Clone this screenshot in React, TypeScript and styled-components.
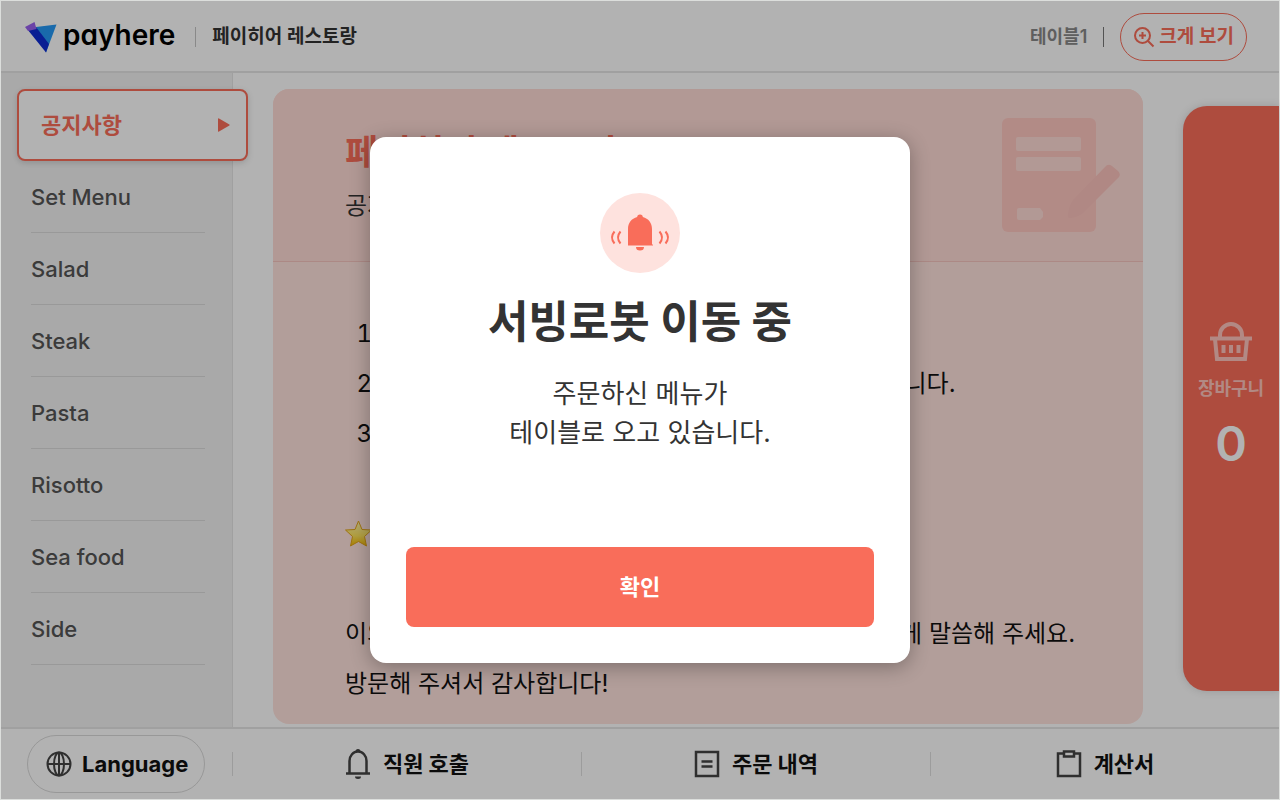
import React from "react";
import styled, { createGlobalStyle, css } from "styled-components";

const color = {
  accent: "#f96d5a",
  white: "#ffffff",
  ink: "#333333",
  line: "#e6e6e6",
};

const GlobalStyle = createGlobalStyle`
  *, *::before, *::after { box-sizing: border-box; }
  body {
    margin: 0;
    background: #fff;
    font-family: Inter, "Noto Sans CJK KR", "Noto Sans", sans-serif;
    color: ${color.ink};
  }
  button { font: inherit; line-height: 28px; color: inherit; background: none; border: 0; padding: 0; cursor: pointer; }
  h1, h2, p, ol, ul { margin: 0; }
`;

const Page = styled.div`
  position: relative;
  display: flex;
  flex-direction: column;
  min-height: 100vh;
  border: 1px solid #dcdedc;
`;

const Header = styled.header`
  display: flex;
  align-items: center;
  justify-content: space-between;
  height: 72px;
  padding: 2px 32px 0 24px;
  border-bottom: 2px solid ${color.line};
`;

const HeaderGroup = styled.div`
  display: flex;
  align-items: center;
  gap: 16px;
`;

const Brand = styled.a`
  display: flex;
  align-items: center;
  gap: 6px;
  margin-right: 4px;
  color: #000;
  text-decoration: none;
`;

const Wordmark = styled.span`
  padding-bottom: 4px;
  font-size: 28px;
  line-height: 32px;
  font-weight: 600;
  font-feature-settings: "cv11";
`;

const Rule = styled.span<{ $tone: string; $height?: number }>`
  width: 1px;
  height: ${(p) => p.$height ?? 20}px;
  background: ${(p) => p.$tone};
`;

const StoreName = styled.h1`
  font-size: 19px;
  line-height: 28px;
  font-weight: 600;
`;

const TableName = styled.span`
  font-size: 18px;
  line-height: 28px;
  font-weight: 600;
  color: #888;
`;

const ZoomButton = styled.button`
  display: flex;
  align-items: center;
  gap: 4px;
  height: 48px;
  padding: 0 12px;
  border: 1px solid ${color.accent};
  border-radius: 24px;
  color: ${color.accent};
  font-size: 19px;
  font-weight: 600;
`;

const Main = styled.main`
  display: flex;
  flex: 1;
`;

const Sidebar = styled.nav`
  flex: none;
  width: 232px;
  padding: 16px 0 0 16px;
  background: #f3f3f3;
  border-right: 1px solid ${color.line};
`;

const MenuList = styled.ul`
  list-style: none;
  padding: 0;
`;

const MenuItem = styled.li<{ $active?: boolean }>`
  height: 72px;
  ${(p) => (p.$active ? css`margin-right: -16px;` : css`margin: 0 27px 0 14px;`)}
`;

const MenuButton = styled.button<{ $active?: boolean }>`
  display: flex;
  align-items: center;
  justify-content: space-between;
  width: 100%;
  height: 100%;
  font-size: 22px;
  font-weight: 500;
  color: #555;
  border-bottom: 1px solid #dcdcdc;
  ${(p) =>
    p.$active &&
    css`
      position: relative;
      padding: 0 16px 0 22px;
      font-weight: 700;
      color: ${color.accent};
      background: #fff;
      border: 2px solid ${color.accent};
      border-radius: 8px;
      box-shadow: 0 2px 6px rgba(0, 0, 0, 0.15);
    `}
`;

const Content = styled.div`
  flex: 1;
  min-width: 0;
  padding: 16px 40px 3px;
`;

const Notice = styled.article`
  overflow: hidden;
  border-radius: 16px;
  background: #ffe3dd;
`;

const NoticeHead = styled.div`
  display: flex;
  justify-content: space-between;
  height: 173px;
  padding: 29px 23px 0 72px;
  background: #ffdcd6;
  border-bottom: 1px solid #f7c5bf;
`;

const NoticeTitle = styled.h2`
  font-size: 36px;
  line-height: 70px;
  font-weight: 700;
  color: ${color.accent};
`;

const NoticeLead = styled.p`
  font-size: 24px;
  line-height: 36px;
`;

const NoticeBody = styled.div`
  padding: 47px 48px 15px 72px;
  font-size: 24px;
  line-height: 50px;
  color: #111;
  white-space: nowrap;
`;

const NoticeList = styled.ol`
  padding-left: 40px;
  margin-bottom: 50px;
`;

const Highlight = styled.p`
  display: flex;
  align-items: center;
  gap: 6px;
  height: 50px;
  margin-bottom: 50px;
`;

const Cart = styled.button`
  flex: none;
  display: flex;
  flex-direction: column;
  align-items: center;
  justify-content: center;
  width: 96px;
  margin: 33px 0 36px;
  border-radius: 24px 0 0 24px;
  background: ${color.accent};
  color: #ffc5bd;
  box-shadow: 0 0 8px rgba(0, 0, 0, 0.15);
`;

const CartLabel = styled.span`
  margin-top: 12px;
  font-size: 18px;
  line-height: 30px;
  font-weight: 600;
`;

const CartCount = styled.span`
  margin-top: 8px;
  font-size: 48px;
  line-height: 64px;
  font-weight: 600;
  color: #fff;
`;

const Footer = styled.footer`
  display: flex;
  align-items: center;
  height: 72px;
  border-top: 2px solid ${color.line};
`;

const LanguageCell = styled.div`
  flex: none;
  width: 231px;
  padding-left: 26px;
`;

const LanguageButton = styled.button`
  display: flex;
  align-items: center;
  gap: 10px;
  height: 58px;
  padding: 0 16px 0 18px;
  border: 1px solid #dadada;
  border-radius: 29px;
  font-size: 22px;
  font-weight: 700;
  color: #111;
`;

const FooterButton = styled.button`
  flex: 1;
  display: flex;
  align-items: center;
  justify-content: center;
  gap: 12px;
  height: 100%;
  font-size: 22px;
  font-weight: 700;
  color: #111;
`;

const Backdrop = styled.div`
  position: absolute;
  inset: 0;
  display: flex;
  align-items: center;
  justify-content: center;
  background: rgba(0, 0, 0, 0.3);
`;

const Dialog = styled.section`
  display: flex;
  flex-direction: column;
  align-items: center;
  width: 540px;
  padding: 56px 36px 36px;
  border-radius: 16px;
  background: #fff;
  box-shadow: 0 4px 20px rgba(0, 0, 0, 0.3);
  text-align: center;
`;

const DialogTitle = styled.h2`
  margin-top: 16px;
  font-size: 44px;
  line-height: 66px;
  font-weight: 700;
`;

const DialogText = styled.p`
  margin-top: 19px;
  font-size: 26px;
  line-height: 39px;
`;

const ConfirmButton = styled.button`
  width: 100%;
  height: 80px;
  margin-top: 95px;
  border-radius: 8px;
  background: ${color.accent};
  color: #fff;
  font-size: 22px;
  font-weight: 700;
`;

const BrandMark = () => (
  <svg width="32" height="32" viewBox="0 0 32 32" aria-hidden="true">
    <path d="M11 6L31.500 3.500L21 31.500Z" fill="#2599f5" />
    <path d="M2.500 8.500L11 6L24 23L21 31.500Z" fill="#0e2cd3" />
    <path d="M0 6L9.500 1L11.500 8L3 10Z" fill="#9a60f0" />
  </svg>
);

const ZoomInIcon = () => (
  <svg width="22" height="22" viewBox="0 0 22 22" fill="none" stroke="currentColor" strokeWidth="2" aria-hidden="true">
    <circle cx="9.500" cy="9.500" r="7.500" />
    <path d="M15 15L20.500 20.500M9.500 6v7M6 9.500h7" />
  </svg>
);

const ArrowIcon = () => (
  <svg width="12" height="14" viewBox="0 0 12 14" fill="currentColor" aria-hidden="true">
    <path d="M0 0.800Q0 0 1 0.400L11.400 6.400Q12 7 11.400 7.600L1 13.600Q0 14 0 13.200Z" />
  </svg>
);

const MemoArt = () => (
  <svg width="118" height="115" viewBox="0 0 118 115" aria-hidden="true">
    <rect x="0" y="0" width="94" height="114" rx="6" fill="#ffc7c1" />
    <g fill="#ffdcd6">
      <rect x="14" y="19" width="65" height="14" rx="2" />
      <rect x="14" y="39" width="65" height="14" rx="2" />
      <path d="M17 90H38L41 94V99L38 102H17Q15 102 15 100V92Q15 90 17 90Z" />
    </g>
    <path
      d="M103 49Q106 45 110 48L116 53Q119 56 117 59L83 93Q78 99 68 100Q65 100 66 96Q67 88 71 82Z"
      fill="#fdc3bd"
    />
  </svg>
);

const StarIcon = () => (
  <svg width="27" height="28" viewBox="0 0 27 28" aria-hidden="true">
    <defs>
      <linearGradient id="star" x1="0" y1="0" x2="0" y2="1">
        <stop offset="0" stopColor="#fff6b0" />
        <stop offset="0.600" stopColor="#ffe45c" />
        <stop offset="1" stopColor="#f5b800" />
      </linearGradient>
    </defs>
    <path
      d="M13.500 1L17 9.500L26.500 10L19.500 16.500L21.500 26L13.500 21.500L5.500 26L7.500 16.500L0.500 10L10 9.500Z"
      fill="url(#star)"
      stroke="#e3a51a"
      strokeWidth="1"
      strokeLinejoin="round"
    />
  </svg>
);

const BasketIcon = () => (
  <svg width="42" height="40" viewBox="0 0 42 40" fill="none" stroke="currentColor" strokeWidth="4" aria-hidden="true">
    <path d="M10 15V13a11 11 0 0 1 22 0v2M0 16.500H42M5 17L7 37H35L37 17" />
    <path d="M13.500 23v8M21 23v8M28.500 23v8" />
  </svg>
);

const GlobeIcon = () => (
  <svg width="26" height="26" viewBox="0 0 26 26" fill="none" stroke="#444" strokeWidth="2" aria-hidden="true">
    <circle cx="13" cy="13" r="11.500" />
    <ellipse cx="13" cy="13" rx="5" ry="11.500" />
    <path d="M1.500 13h23M13 1.500v23" />
  </svg>
);

const BellIcon = () => (
  <svg width="26" height="32" viewBox="1 0 26 32" fill="none" stroke="#444" strokeWidth="2.500" aria-hidden="true">
    <path d="M5.500 25V13a8.500 9.500 0 0 1 17 0V25M2 25.500H26" />
    <path d="M11.500 3.500a2.500 2.500 0 0 1 5 0zM11 28.500h6a3 2.500 0 0 1-6 0z" fill="#444" stroke="none" />
  </svg>
);

const OrderIcon = () => (
  <svg width="26" height="30" viewBox="1 0 26 30" fill="none" stroke="#444" strokeWidth="2.500" aria-hidden="true">
    <path d="M3 3H25V27H3ZM8.500 12.500h11M8.500 17.500h11" />
  </svg>
);

const BillIcon = () => (
  <svg width="26" height="30" viewBox="1 0 26 30" fill="none" stroke="#444" strokeWidth="2.500" aria-hidden="true">
    <path d="M9 4.500H3V27H25V4.500H19M9 2.500H19V7.500H9Z" />
  </svg>
);

const RingingBell = () => (
  <svg width="80" height="80" viewBox="0 0 80 80" aria-hidden="true">
    <circle cx="40" cy="40" r="40" fill="#fee2de" />
    <path
      d="M37.200 24a2.800 2.500 0 0 1 5.600 0C48.500 25.500 52 30 52 36V51.500H53V52.500H28V36C28 30 31.500 25.500 37.200 24Z"
      fill="#f96d5a"
    />
    <path d="M36 54h8a4 3.500 0 0 1-8 0z" fill="#f96d5a" />
    <path
      d="M14.500 38.500Q9.500 44.500 14.500 50.500M20.500 38.500Q15.500 44.500 20.500 50.500M59.500 38.500Q64.500 44.500 59.500 50.500M65.500 38.500Q70.500 44.500 65.500 50.500"
      fill="none"
      stroke="#f96d5a"
      strokeWidth="2"
    />
  </svg>
);

const menu = ["Set Menu", "Salad", "Steak", "Pasta", "Risotto", "Sea food", "Side"];

const rules = [
  "주문은 테이블 태블릿에서 가능합니다.",
  "주문하신 메뉴는 서빙로봇이 테이블까지 가져다 드립니다.",
  "결제는 카운터에서 도와드립니다.",
];

export default function App() {
  return (
    <>
      <GlobalStyle />
      <Page>
        <Header>
          <HeaderGroup>
            <Brand href="#">
              <BrandMark />
              <Wordmark>payhere</Wordmark>
            </Brand>
            <Rule $tone="#c4c4c4" />
            <StoreName>페이히어 레스토랑</StoreName>
          </HeaderGroup>
          <HeaderGroup>
            <TableName>테이블1</TableName>
            <Rule $tone="#777" />
            <ZoomButton type="button">
              <ZoomInIcon />
              크게 보기
            </ZoomButton>
          </HeaderGroup>
        </Header>

        <Main>
          <Sidebar>
            <MenuList>
              <MenuItem $active>
                <MenuButton type="button" $active>
                  공지사항
                  <ArrowIcon />
                </MenuButton>
              </MenuItem>
              {menu.map((name) => (
                <MenuItem key={name}>
                  <MenuButton type="button">{name}</MenuButton>
                </MenuItem>
              ))}
            </MenuList>
          </Sidebar>

          <Content>
            <Notice>
              <NoticeHead>
                <div>
                  <NoticeTitle>페이히어 레스토랑</NoticeTitle>
                  <NoticeLead>공지사항을 확인해 주세요.</NoticeLead>
                </div>
                <MemoArt />
              </NoticeHead>
              <NoticeBody>
                <NoticeList>
                  {rules.map((rule) => (
                    <li key={rule}>{rule}</li>
                  ))}
                </NoticeList>
                <Highlight>
                  <StarIcon />
                  리뷰 이벤트 진행 중
                </Highlight>
                <p>이외에 궁금하신 점이나 필요하신 게 있으면 저희 직원에게 말씀해 주세요.</p>
                <p>방문해 주셔서 감사합니다!</p>
              </NoticeBody>
            </Notice>
          </Content>

          <Cart type="button">
            <BasketIcon />
            <CartLabel>장바구니</CartLabel>
            <CartCount>0</CartCount>
          </Cart>
        </Main>

        <Footer>
          <LanguageCell>
            <LanguageButton type="button">
              <GlobeIcon />
              Language
            </LanguageButton>
          </LanguageCell>
          <Rule $tone="#e0e0e0" $height={24} />
          <FooterButton type="button">
            <BellIcon />
            직원 호출
          </FooterButton>
          <Rule $tone="#e0e0e0" $height={24} />
          <FooterButton type="button">
            <OrderIcon />
            주문 내역
          </FooterButton>
          <Rule $tone="#e0e0e0" $height={24} />
          <FooterButton type="button">
            <BillIcon />
            계산서
          </FooterButton>
        </Footer>

        <Backdrop>
          <Dialog role="dialog" aria-modal="true" aria-labelledby="dialog-title">
            <RingingBell />
            <DialogTitle id="dialog-title">서빙로봇 이동 중</DialogTitle>
            <DialogText>
              주문하신 메뉴가
              <br />
              테이블로 오고 있습니다.
            </DialogText>
            <ConfirmButton type="button">확인</ConfirmButton>
          </Dialog>
        </Backdrop>
      </Page>
    </>
  );
}
